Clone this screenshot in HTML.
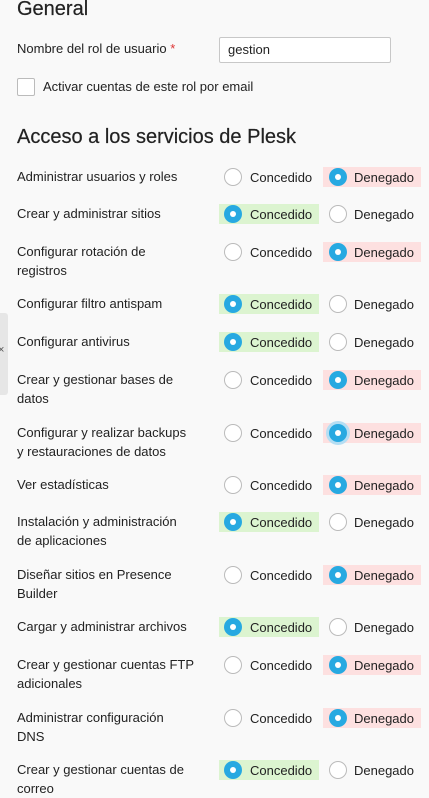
<!DOCTYPE html>
<html><head><meta charset="utf-8"><style>
body{margin:0;width:429px;height:796px;background:#f9f9f9;font-family:"Liberation Sans",sans-serif;color:#222;position:relative;overflow:hidden;font-size:13px}
.a{position:absolute}
h2{position:absolute;margin:0;font-weight:normal;font-size:20px;color:#222;-webkit-text-stroke:0.2px #222}
.lbl{position:absolute;left:17px;line-height:18.5px;width:190px}
.r{position:absolute;width:16px;height:16px;border:1px solid #bbb;border-radius:50%;background:#fff}
.r.on{border:none;width:18px;height:18px;background:#27a9e1}
.r.on::after{content:"";position:absolute;left:6px;top:6px;width:6px;height:6px;border-radius:50%;background:#fff}
.g{position:absolute;left:219px;width:100px;height:20px;background:#dcf4d0}
.d{position:absolute;left:323px;width:98px;height:20px;background:#fde0e0}
.t{position:absolute;line-height:18px;margin-top:1px}
</style></head><body>
<h2 style="left:17px;top:-2px">General</h2>
<div class="lbl" style="top:40px">Nombre del rol de usuario <span style="color:#d33">*</span></div>
<div class="a" style="left:219px;top:37px;width:170px;height:24px;border:1px solid #c8c8c8;border-radius:2px;background:#fff"></div>
<div class="a" style="left:228px;top:41px;line-height:18px">gestion</div>
<div class="a" style="left:17px;top:78px;width:16px;height:16px;border:1px solid #bbb;border-radius:2px;background:#fff"></div>
<div class="a" style="left:43px;top:78px;line-height:18px">Activar cuentas de este rol por email</div>
<h2 style="left:17px;top:126px">Acceso a los servicios de Plesk</h2>
<div class="a" style="left:0;top:313px;width:8px;height:82px;background:#e6e6e6;border-radius:0 3px 3px 0"></div>
<div class="a" style="left:-2px;top:344px;font-size:11px;color:#555">×</div>

<div class="lbl" style="top:168px">Administrar usuarios y roles</div>
<div class="d" style="top:167px"></div><div class="r" style="left:224px;top:168px"></div><div class="t" style="left:250px;top:168px">Concedido</div><div class="r on" style="left:329px;top:168px"></div><div class="t" style="left:354px;top:168px">Denegado</div>

<div class="lbl" style="top:205px">Crear y administrar sitios</div>
<div class="g" style="top:204px"></div><div class="r on" style="left:224px;top:205px"></div><div class="t" style="left:250px;top:205px">Concedido</div><div class="r" style="left:329px;top:205px"></div><div class="t" style="left:354px;top:205px">Denegado</div>

<div class="lbl" style="top:243px">Configurar rotación de<br>registros</div>
<div class="d" style="top:242px"></div><div class="r" style="left:224px;top:243px"></div><div class="t" style="left:250px;top:243px">Concedido</div><div class="r on" style="left:329px;top:243px"></div><div class="t" style="left:354px;top:243px">Denegado</div>

<div class="lbl" style="top:295px">Configurar filtro antispam</div>
<div class="g" style="top:294px"></div><div class="r on" style="left:224px;top:295px"></div><div class="t" style="left:250px;top:295px">Concedido</div><div class="r" style="left:329px;top:295px"></div><div class="t" style="left:354px;top:295px">Denegado</div>

<div class="lbl" style="top:333px">Configurar antivirus</div>
<div class="g" style="top:332px"></div><div class="r on" style="left:224px;top:333px"></div><div class="t" style="left:250px;top:333px">Concedido</div><div class="r" style="left:329px;top:333px"></div><div class="t" style="left:354px;top:333px">Denegado</div>

<div class="lbl" style="top:371px">Crear y gestionar bases de<br>datos</div>
<div class="d" style="top:370px"></div><div class="r" style="left:224px;top:371px"></div><div class="t" style="left:250px;top:371px">Concedido</div><div class="r on" style="left:329px;top:371px"></div><div class="t" style="left:354px;top:371px">Denegado</div>

<div class="lbl" style="top:424px">Configurar y realizar backups<br>y restauraciones de datos</div>
<div class="d" style="top:423px"></div><div class="r" style="left:224px;top:424px"></div><div class="t" style="left:250px;top:424px">Concedido</div><div class="r on" style="left:329px;top:424px;box-shadow:0 0 0 3px #b5def3"></div><div class="t" style="left:354px;top:424px">Denegado</div>

<div class="lbl" style="top:476px">Ver estadísticas</div>
<div class="d" style="top:475px"></div><div class="r" style="left:224px;top:476px"></div><div class="t" style="left:250px;top:476px">Concedido</div><div class="r on" style="left:329px;top:476px"></div><div class="t" style="left:354px;top:476px">Denegado</div>

<div class="lbl" style="top:513px">Instalación y administración<br>de aplicaciones</div>
<div class="g" style="top:512px"></div><div class="r on" style="left:224px;top:513px"></div><div class="t" style="left:250px;top:513px">Concedido</div><div class="r" style="left:329px;top:513px"></div><div class="t" style="left:354px;top:513px">Denegado</div>

<div class="lbl" style="top:566px">Diseñar sitios en Presence<br>Builder</div>
<div class="d" style="top:565px"></div><div class="r" style="left:224px;top:566px"></div><div class="t" style="left:250px;top:566px">Concedido</div><div class="r on" style="left:329px;top:566px"></div><div class="t" style="left:354px;top:566px">Denegado</div>

<div class="lbl" style="top:618px">Cargar y administrar archivos</div>
<div class="g" style="top:617px"></div><div class="r on" style="left:224px;top:618px"></div><div class="t" style="left:250px;top:618px">Concedido</div><div class="r" style="left:329px;top:618px"></div><div class="t" style="left:354px;top:618px">Denegado</div>

<div class="lbl" style="top:656px">Crear y gestionar cuentas FTP<br>adicionales</div>
<div class="d" style="top:655px"></div><div class="r" style="left:224px;top:656px"></div><div class="t" style="left:250px;top:656px">Concedido</div><div class="r on" style="left:329px;top:656px"></div><div class="t" style="left:354px;top:656px">Denegado</div>

<div class="lbl" style="top:709px">Administrar configuración<br>DNS</div>
<div class="d" style="top:708px"></div><div class="r" style="left:224px;top:709px"></div><div class="t" style="left:250px;top:709px">Concedido</div><div class="r on" style="left:329px;top:709px"></div><div class="t" style="left:354px;top:709px">Denegado</div>

<div class="lbl" style="top:761px">Crear y gestionar cuentas de<br>correo</div>
<div class="g" style="top:760px"></div><div class="r on" style="left:224px;top:761px"></div><div class="t" style="left:250px;top:761px">Concedido</div><div class="r" style="left:329px;top:761px"></div><div class="t" style="left:354px;top:761px">Denegado</div>
</body></html>
